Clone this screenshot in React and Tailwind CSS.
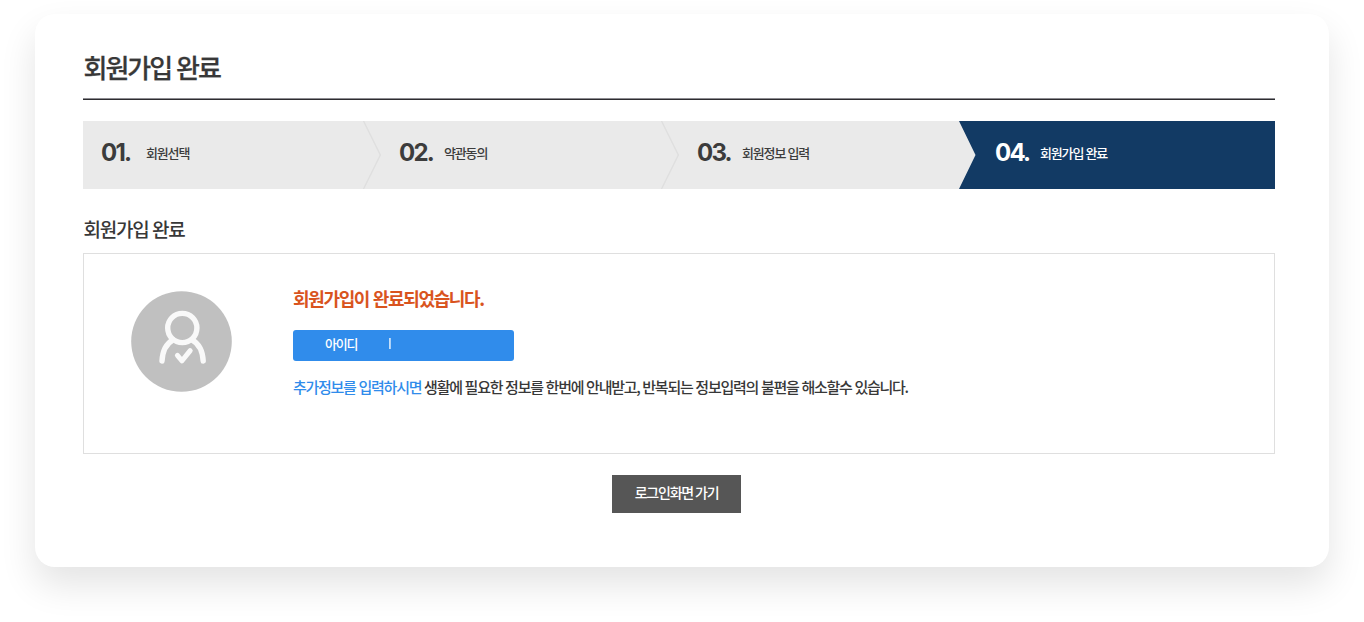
import React from 'react';

const steps = [
  { no: '01.', label: '회원선택' },
  { no: '02.', label: '약관동의' },
  { no: '03.', label: '회원정보 입력' },
  { no: '04.', label: '회원가입 완료', active: true },
];

// Chevron edge between two steps, filled on the outside when the next step is active
function StepArrow({ beforeActive }) {
  return (
    <svg className="absolute right-0 top-0 h-full w-[18px]" viewBox="0 0 18 69" preserveAspectRatio="none">
      {beforeActive ? (
        <path d="M0 0H18V69H0L16.5 34.5Z" fill="#123a64" />
      ) : (
        <path d="M0.5 0L17.3 34.5L0.5 69" fill="none" stroke="#dfdfdf" strokeWidth="1.4" />
      )}
    </svg>
  );
}

function Step({ no, label, active, nextActive, last }) {
  return (
    <li className={`relative flex flex-1 items-center pl-[18px] pb-[5px] ${active ? 'bg-[#123a64] text-white' : 'bg-[#eaeaea] text-[#3c3c3c]'}`}>
      <span className="w-[45px] font-['Inter'] text-[24px] font-bold leading-none tracking-[-1.8px]">{no}</span>
      <span className="pb-[1px] text-[13px] leading-none tracking-[-1.15px] [word-spacing:0.5px]">{label}</span>
      {!last && <StepArrow beforeActive={nextActive} />}
    </li>
  );
}

function UserCheckIcon() {
  return (
    <svg className="mt-[37px] ml-[47px] h-[101px] w-[101px] shrink-0" viewBox="0 0 101 101" fill="none">
      <circle cx="50.5" cy="50.5" r="50.3" fill="#c0c0c0" />
      <g stroke="#f9f9f9" strokeWidth="5.4" strokeLinecap="round" strokeLinejoin="round">
        <circle cx="51.3" cy="37" r="14.6" />
        <path d="M31 70C31.5 60 35.5 52.5 42 48.8" />
        <path d="M72.2 70C71.7 60 67.7 52.5 61 48.8" />
        <path d="M46.4 64.4L51 69.8L59.2 59.6" strokeWidth="5" />
      </g>
    </svg>
  );
}

export default function App() {
  return (
    <div className="h-[622px] overflow-hidden bg-white px-[35px] pt-[14px] font-['Noto_Sans_CJK_KR',sans-serif] font-medium text-[#383838]">
      <main className="flex h-[553px] w-[1294px] flex-col rounded-[20px] bg-white pl-[48px] pr-[54px] shadow-[0_18px_36px_rgba(0,0,0,0.11)]">
        <h1 className="mt-[38px] h-[46px] pl-[0.5px] text-[26px] leading-[30px] tracking-[-2px] [word-spacing:1px] [-webkit-text-stroke:0.25px_currentColor]">회원가입 완료</h1>
        <div className="h-[2px] w-full border-t border-[#8d8c91] bg-[#2d2c30]" />

        <ol className="mt-[21px] flex h-[68px] w-full">
          {steps.map((step, i) => (
            <Step key={step.no} {...step} nextActive={steps[i + 1]?.active} last={i === steps.length - 1} />
          ))}
        </ol>

        <h2 className="mt-[29px] h-[35px] pl-[0.5px] text-[19px] leading-[22px] tracking-[-1.25px] [word-spacing:0.5px]">회원가입 완료</h2>

        <section className="flex h-[201px] w-full border border-[#dfdfdf]">
          <UserCheckIcon />
          <div className="ml-[61px] flex flex-col items-start">
            <p className="mt-[32px] text-[18px] font-bold leading-[24px] tracking-[-1.35px] [word-spacing:1px] text-[#d9541e]">
              회원가입이 완료되었습니다.
            </p>
            <div className="mt-[20px] flex h-[31px] w-[221px] items-center rounded-[3px] bg-[#308ceb] pb-[4px] pl-[32px] text-[13px] leading-none text-white">
              <span className="w-[64px] tracking-[-1.2px]">아이디</span>
              <span className="h-[11px] w-[2px] border-l border-white/30 bg-white/60" />
            </div>
            <p className="mt-[15px] text-[15px] leading-[22px] tracking-[-1.27px] [word-spacing:0.8px]">
              <span className="text-[#308ceb]">추가정보를 입력하시면</span> 생활에 필요한 정보를 한번에 안내받고, 반복되는 정보입력의 불편을 해소할수 있습니다.
            </p>
          </div>
        </section>

        <button className="ml-[529px] mt-[21px] h-[38px] w-[129px] bg-[#565656] pb-[5px] text-[14px] leading-none tracking-[-1.2px] text-white">
          로그인화면 가기
        </button>
      </main>
    </div>
  );
}
